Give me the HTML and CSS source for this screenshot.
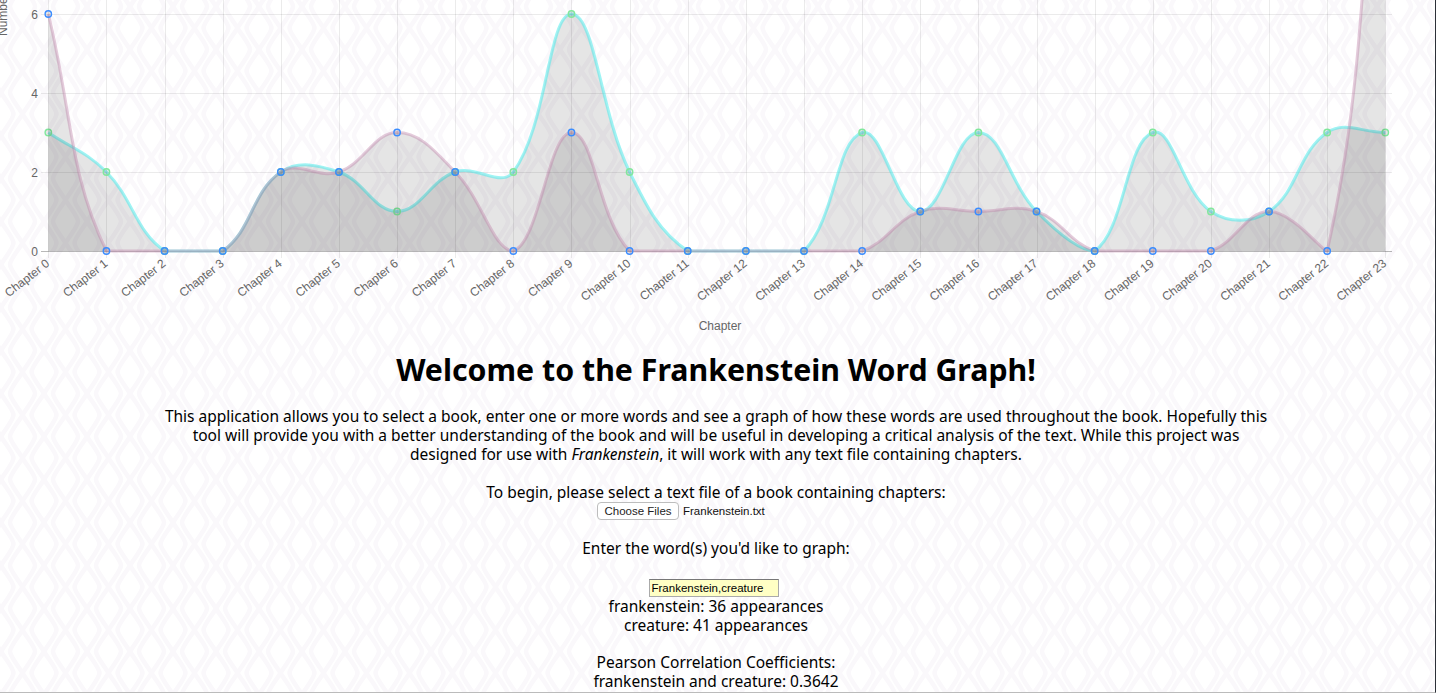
FILE: index.html
```html
<!DOCTYPE html>
<html lang="en">
<head>
    <meta charset="UTF-8">
    <meta name="viewport" content="width=device-width, initial-scale=1.0">
    <title>Frankenstein Word Graph</title>
    <link rel="stylesheet" href="styles.css">
</head>

<body>
    <div class="page">
        <svg id="chart" class="chart" viewBox="0 0 1435 339"></svg>

        <h1 class="title">Welcome to the Frankenstein Word Graph!</h1>

        <p class="intro">
            This application allows you to select a book, enter one or more words and see a graph of how these words are used throughout the book. Hopefully this<br>
            tool will provide you with a better understanding of the book and will be useful in developing a critical analysis of the text. While this project was<br>
            designed for use with <em>Frankenstein</em>, it will work with any text file containing chapters.
        </p>

        <p class="line">To begin, please select a text file of a book containing chapters:</p>
        <div class="file-row">
            <button class="file-button" type="button">Choose Files</button>
            <span class="file-name">Frankenstein.txt</span>
        </div>

        <p class="line line-gap">Enter the word(s) you'd like to graph:</p>
        <div class="word-row">
            <input class="word-input" type="text" value="Frankenstein,creature">
        </div>

        <p class="line">frankenstein: 36 appearances</p>
        <p class="line">creature: 41 appearances</p>

        <p class="line line-gap-small">Pearson Correlation Coefficients:</p>
        <p class="line">frankenstein and creature: 0.3642</p>
    </div>

    <script src="chart.js"></script>
</body>
</html>
```

FILE: styles.css
```css
html, body {
    height: 100%;
}
body {
    margin: 0;
    overflow: hidden;
    background-color: #fff;
    background-image: url("data:image/svg+xml,%3Csvg xmlns='http://www.w3.org/2000/svg' width='43' height='43'%3E%3Cg fill='none' stroke='%23faf8fb' stroke-width='4.5'%3E%3Cpath d='M21.5 0C27 9 34 17 34 21.5C34 26 27 34 21.5 43C16 34 9 26 9 21.5C9 17 16 9 21.5 0Z'/%3E%3Cpath d='M0 -21.5C5.5 -12.500 12.500 -4.500 12.500 0C12.500 4.500 5.500 12.500 0 21.500C5.500 30.500 12.500 38.500 12.500 43C12.500 47.500 5.500 55.500 0 64.500'/%3E%3Cpath d='M43 -21.500C37.500 -12.500 30.500 -4.500 30.500 0C30.500 4.500 37.500 12.500 43 21.500C37.500 30.500 30.500 38.500 30.500 43C30.500 47.500 37.500 55.500 43 64.500'/%3E%3C/g%3E%3C/svg%3E");
    background-position: 0.5px -15.5px;
    font-family: "Noto Sans", Arial, sans-serif;
    color: #000;
}
.page {
    height: 692px;
    padding-right: 3px;
    overflow: hidden;
    border-right: 1px solid #2c3038;
    border-bottom: 1px solid #bbb;
    text-align: center;
}
.chart {
    display: block;
    width: 1435px;
    height: 339px;
}
.chart text {
    font-family: "Liberation Sans", Arial, sans-serif;
    font-size: 12px;
    fill: #666;
}
.grid-line {
    stroke: rgba(0, 0, 0, 0.08);
    stroke-width: 1;
}
.zero-line {
    stroke: rgba(0, 0, 0, 0.28);
    stroke-width: 1;
}
.area {
    fill: rgba(0, 0, 0, 0.1);
    stroke: none;
}
.curve {
    fill: none;
    stroke-width: 3;
}
.curve-frankenstein {
    stroke: rgba(190, 130, 170, 0.42);
}
.curve-creature {
    stroke: rgba(80, 235, 235, 0.55);
}
.dot {
    fill: rgba(0, 0, 0, 0.08);
    stroke-width: 1.4;
}
.dot-frankenstein {
    stroke: #3b8cff;
}
.dot-creature {
    stroke: #80e89c;
}
.title {
    margin: 12px 0 0 0;
    font-size: 30.3px;
    line-height: 38px;
    font-weight: 700;
}
.intro {
    margin: 18px 0 0 0;
    font-size: 15.5px;
    line-height: 19px;
}
.line {
    margin: 0;
    font-size: 15.5px;
    line-height: 19px;
}
.intro + .line {
    margin-top: 19px;
}
.line-gap {
    margin-top: 19px;
}
.line-gap-small {
    margin-top: 18px;
}
.file-row {
    display: flex;
    align-items: center;
    gap: 4px;
    width: 238px;
    height: 18px;
    margin: 0 auto;
    font-family: "Liberation Sans", Arial, sans-serif;
}
.file-button {
    width: 82px;
    height: 18px;
    padding: 0;
    border: 1px solid #bdbdbd;
    border-radius: 4px;
    background: #fff;
    font: 11.5px "Liberation Sans", Arial, sans-serif;
    color: #222;
}
.file-name {
    font-size: 11.5px;
    color: #111;
}
.word-row {
    display: flex;
    justify-content: center;
    height: 18px;
    margin-top: 21px;
    padding-right: 5px;
}
.word-input {
    box-sizing: border-box;
    width: 130px;
    height: 18px;
    padding: 0 2px;
    border: 1px solid #aaa;
    border-top-color: #777;
    background: #ffffc4;
    font: 11.5px "Liberation Sans", Arial, sans-serif;
    color: #000;
}
```

FILE: chart.js
```js
// Word counts per chapter
var Frankenstein = [6,0,0,0,2,2,3,2,0,3,0,0,0,0,0,1,1,1,0,0,0,1,0,14];
var Creature = [3,2,0,0,2,2,1,2,2,6,2,0,0,0,3,1,3,1,0,3,1,1,3,3];

var SVG_NS = "http://www.w3.org/2000/svg";
var Chart = document.getElementById("chart");
var LEFT = 48.3, STEP = 58.13, BASE = 251, UNIT = 39.5;
var TOP = BASE - 14 * UNIT, RIGHT = LEFT + 23 * STEP;

function Add(tag, cls, attrs, text) {
    var el = document.createElementNS(SVG_NS, tag);
    el.setAttribute("class", cls);
    for (var k in attrs) {
        el.setAttribute(k, attrs[k]);
    }
    if (text) {
        el.textContent = text;
    }
    Chart.appendChild(el);
    return el;
}

function Cap(v, lo, hi) {
    return Math.max(lo, Math.min(hi, v));
}

// same spline the chart library uses, tension 0.4, capped to the chart area
function CurvePath(data) {
    var pts = data.map(function (v, i) {
        return { x: LEFT + i * STEP, y: BASE - v * UNIT };
    });
    var ctrl = pts.map(function (p, i) {
        var a = pts[i - 1] || p, b = pts[i + 1] || p;
        var d01 = Math.hypot(p.x - a.x, p.y - a.y);
        var d12 = Math.hypot(b.x - p.x, b.y - p.y);
        var fa = 0.4 * d01 / (d01 + d12);
        var fb = 0.4 * d12 / (d01 + d12);
        return {
            px: Cap(p.x - fa * (b.x - a.x), LEFT, RIGHT),
            py: Cap(p.y - fa * (b.y - a.y), TOP, BASE),
            nx: Cap(p.x + fb * (b.x - a.x), LEFT, RIGHT),
            ny: Cap(p.y + fb * (b.y - a.y), TOP, BASE)
        };
    });
    var d = "M" + pts[0].x + " " + pts[0].y;
    for (var i = 1; i < pts.length; i++) {
        d += "C" + ctrl[i - 1].nx + " " + ctrl[i - 1].ny + " " + ctrl[i].px + " " + ctrl[i].py + " " + pts[i].x + " " + pts[i].y;
    }
    return { d: d, pts: pts };
}

function DrawSet(data, name) {
    var curve = CurvePath(data);
    Add("path", "area", { d: curve.d + "L" + RIGHT + " " + BASE + "L" + LEFT + " " + BASE + "Z" });
    Add("path", "curve curve-" + name, { d: curve.d });
    curve.pts.forEach(function (p) {
        Add("circle", "dot dot-" + name, { cx: p.x, cy: p.y, r: 3.2 });
    });
}

// grid
[6, 4, 2].forEach(function (v) {
    var y = Math.round(BASE - v * UNIT) + 0.5;
    Add("line", "grid-line", { x1: 41, x2: 1392, y1: y, y2: y });
});
Add("line", "zero-line", { x1: 41, x2: 1392, y1: BASE + 0.5, y2: BASE + 0.5 });
for (var i = 0; i < 24; i++) {
    var gx = Math.round(LEFT + i * STEP) + 0.5;
    Add("line", "grid-line", { x1: gx, x2: gx, y1: 0, y2: 258 });
}

// labels
[6, 4, 2, 0].forEach(function (v) {
    Add("text", "tick", { x: 38, y: BASE - v * UNIT + 4.5, "text-anchor": "end" }, String(v));
});
for (var c = 0; c < 24; c++) {
    var lx = LEFT + c * STEP + 2, ly = 265;
    Add("text", "tick", {
        x: lx, y: ly, "text-anchor": "end",
        transform: "rotate(-38 " + lx + " " + ly + ")"
    }, "Chapter " + c);
}
Add("text", "axis", { x: 720, y: 330, "text-anchor": "middle" }, "Chapter");
Add("text", "axis", {
    x: 7, y: 36, transform: "rotate(-90 7 36)"
}, "Number of Appearances");

// first data set sits on top
DrawSet(Creature, "creature");
DrawSet(Frankenstein, "frankenstein");
```
